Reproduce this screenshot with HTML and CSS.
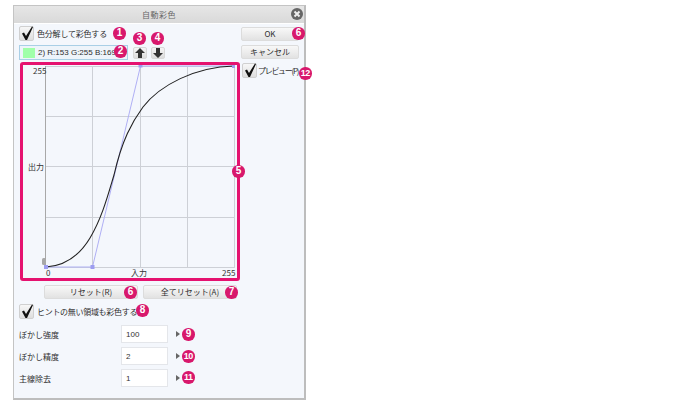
FILE: index.html
```html
<!DOCTYPE html>
<html lang="ja">

<head>
  <meta charset="UTF-8">
  <meta name="viewport" content="width=device-width, initial-scale=1.0">
  <title>自動彩色</title>
  <link rel="stylesheet" href="styles.css">
</head>

<body>

  <div class="dialog">
    <div class="title-bar">
      <span class="title">自動彩色</span>
      <span class="close-button">
        <svg width="12" height="12" viewBox="0 0 12 12">
          <circle cx="6" cy="6" r="6" fill="#666"/>
          <path d="M3.500 3.500l5 5M8.500 3.500l-5 5" stroke="#eee" stroke-width="2"/>
        </svg>
      </span>
    </div>

    <div class="dialog-body">
      <div class="left-column">
        <label class="check-row">
          <span class="checkbox"><svg width="15" height="15" viewBox="0 0 15 15"><path d="M3 7.500L5 6.500L7 10L13 0.500L14 1L8 14H6.500Z" fill="#111"/></svg></span>
          <span>色分解して彩色する</span>
        </label>

        <div class="color-row">
          <div class="color-select">
            <span class="swatch"></span>
            <span class="color-text">2) R:153 G:255 B:169</span>
          </div>
          <button class="arrow-button"><svg width="10" height="10" viewBox="0 0 10 10"><path d="M5 0L10 5H7V10H3V5H0Z" fill="#333"/></svg></button>
          <button class="arrow-button"><svg width="10" height="10" viewBox="0 0 10 10"><path d="M5 10L10 5H7V0H3V5H0Z" fill="#333"/></svg></button>
        </div>

        <div class="graph-frame">
          <svg class="graph" width="214" height="213" viewBox="23 65 214 213">
            <g class="grid-line">
              <path d="M92.500 66V267M140.500 66V267M187.500 66V267M234.500 66V267"/>
              <path d="M45 116.500H235M45 166.500H235M45 217.500H235M45 267.500H235M45 66.500H235"/>
            </g>
            <path class="axis-line" d="M45.500 66V268"/>
            <path class="control-line" d="M46 267H92.500L140.500 66H234"/>
            <path class="curve-line" d="M46 267C62 266 78 258 90 238C102 218 108 195 114 175C122 140 132 122 143 107C160 85 195 67 234 66"/>
            <rect class="handle-gray" x="42" y="258" width="4" height="7" rx="1.500"/>
            <rect class="handle" x="44" y="265" width="4" height="4"/>
            <rect class="handle" x="90.500" y="265" width="4" height="4"/>
            <rect class="handle" x="138.500" y="64.500" width="4" height="3"/>
            <rect class="handle" x="232" y="65" width="3" height="3"/>
            <text x="33" y="73.500">255</text>
            <text x="28" y="170">出力</text>
            <text x="46" y="276">0</text>
            <text x="131" y="276">入力</text>
            <text x="222" y="276">255</text>
          </svg>
        </div>

        <div class="reset-row">
          <button class="dialog-button reset-button">リセット(R)</button>
          <button class="dialog-button reset-button">全てリセット(A)</button>
        </div>

        <label class="check-row hint-row">
          <span class="checkbox"><svg width="15" height="15" viewBox="0 0 15 15"><path d="M3 7.500L5 6.500L7 10L13 0.500L14 1L8 14H6.500Z" fill="#111"/></svg></span>
          <span>ヒントの無い領域も彩色する</span>
        </label>

        <div class="field-row">
          <span class="field-label">ぼかし強度</span>
          <input class="field-input" value="100">
          <span class="field-arrow"></span>
        </div>
        <div class="field-row">
          <span class="field-label">ぼかし精度</span>
          <input class="field-input" value="2">
          <span class="field-arrow"></span>
        </div>
        <div class="field-row">
          <span class="field-label">主線除去</span>
          <input class="field-input" value="1">
          <span class="field-arrow"></span>
        </div>
      </div>

      <div class="right-column">
        <button class="dialog-button">OK</button>
        <button class="dialog-button">キャンセル</button>
        <label class="check-row preview-row">
          <span class="checkbox"><svg width="15" height="15" viewBox="0 0 15 15"><path d="M3 7.500L5 6.500L7 10L13 0.500L14 1L8 14H6.500Z" fill="#111"/></svg></span>
          <span>プレビュー(P)</span>
        </label>
      </div>
    </div>

    <!-- Number badges sit over the dialog -->
    <span class="badge badge-1">1</span>
    <span class="badge badge-2">2</span>
    <span class="badge badge-3">3</span>
    <span class="badge badge-4">4</span>
    <span class="badge badge-5">5</span>
    <span class="badge badge-6">6</span>
    <span class="badge badge-6b">6</span>
    <span class="badge badge-7">7</span>
    <span class="badge badge-8">8</span>
    <span class="badge badge-9">9</span>
    <span class="badge badge-10">10</span>
    <span class="badge badge-11">11</span>
    <span class="badge badge-12">12</span>
  </div>

</body>

</html>
```

FILE: styles.css
```css
body {
  font-family: 'Noto Sans CJK JP', 'Liberation Sans', sans-serif;
  font-size: 8px;
  color: #2e2e2e;
  background-color: #fff;
  margin: 0;
  padding: 5px 0 0 13px;
}

.dialog {
  position: relative;
  box-sizing: border-box;
  width: 293px;
  height: 395px;
  background-color: #f4f7fc;
  border: 1px solid #c4c4c4;
  border-right: 2px solid #bdbdbd;
  border-bottom: 2px solid #bdbdbd;
}

.title-bar {
  position: relative;
  height: 17px;
  background: linear-gradient(#e6e6e6, #d9d9d9);
  border-bottom: 1px solid #fff;
  text-align: center;
  line-height: 17px;
  color: #666;
  letter-spacing: 0.5px;
}

.close-button {
  position: absolute;
  top: 2px;
  right: 1px;
  height: 12px;
  line-height: 0;
}

.dialog-body {
  display: flex;
  padding: 2px 0 0 5px;
}

.left-column {
  width: 222px;
}

.right-column {
  width: 58px;
  padding-top: 1px;
}

button {
  font-family: inherit;
  font-size: inherit;
  color: inherit;
  padding: 0;
}

.check-row {
  display: flex;
  align-items: center;
  height: 15px;
  gap: 3px;
  white-space: nowrap;
  letter-spacing: -0.2px;
}

.checkbox {
  width: 15px;
  height: 15px;
  box-sizing: border-box;
  background: linear-gradient(#f7f7f7, #dedede);
  border: 1px solid #d0d0d0;
  border-radius: 2px;
  flex-shrink: 0;
}

.checkbox svg {
  display: block;
  margin: -1px;
}

.color-row {
  display: flex;
  align-items: center;
  margin-top: 4px;
  height: 15px;
}

.color-select {
  box-sizing: border-box;
  display: flex;
  align-items: center;
  width: 109px;
  height: 15px;
  background-color: #eef4fa;
  border: 1px solid #a9cfe6;
  padding-left: 3px;
  overflow: hidden;
  white-space: nowrap;
}

.swatch {
  width: 12px;
  height: 10px;
  background-color: #a0ffa9;
  flex-shrink: 0;
  margin-right: 3px;
}

.color-text {
  font-family: 'Liberation Sans', sans-serif;
  font-size: 8px;
}

.arrow-button {
  box-sizing: border-box;
  width: 14px;
  height: 12px;
  margin: 1px 0 0 5px;
  display: flex;
  align-items: center;
  justify-content: center;
  background: linear-gradient(#f5f5f5, #dcdcdc);
  border: 1px solid #d8d8d8;
  border-radius: 2px;
}

.arrow-button + .arrow-button {
  margin-left: 4px;
}

.graph-frame {
  box-sizing: border-box;
  width: 220px;
  height: 219px;
  margin: 2px 0 0 1px;
  border: 3px solid #e5126f;
  border-radius: 3px;
}

.graph {
  display: block;
}

.grid-line path {
  fill: none;
  stroke: #cdd0d6;
  stroke-width: 1;
}

.axis-line {
  fill: none;
  stroke: #a8a8a8;
  stroke-width: 1;
}

.control-line {
  fill: none;
  stroke: #b0b0f5;
  stroke-width: 1;
}

.curve-line {
  fill: none;
  stroke: #222;
  stroke-width: 1.100;
}

.handle {
  fill: #9d9df0;
}

.handle-gray {
  fill: #a8a8a8;
}

.graph text {
  font-family: 'Noto Sans CJK JP', 'Liberation Sans', sans-serif;
  font-size: 8px;
  fill: #333;
}

.reset-row {
  display: flex;
  gap: 5px;
  margin: 4px 0 0 25px;
}

.dialog-button {
  box-sizing: border-box;
  display: block;
  width: 58px;
  height: 14px;
  line-height: 12px;
  margin-bottom: 4px;
  background: linear-gradient(#f8f8f8, #e2e2e2);
  border: 1px solid #dcdcdc;
  border-radius: 2px;
  text-align: center;
}

.reset-button {
  width: 94px;
  margin-bottom: 0;
}

.hint-row {
  margin-top: 5px;
  margin-bottom: 6px;
  letter-spacing: -0.3px;
}

.preview-row {
  margin: 4px 0 0 1px;
  gap: 1px;
  letter-spacing: -1.3px;
}

.field-row {
  display: flex;
  align-items: center;
  height: 18px;
  margin-bottom: 4px;
}

.field-label {
  width: 102px;
}

.field-input {
  box-sizing: border-box;
  width: 47px;
  height: 18px;
  background-color: #fff;
  border: 1px solid #e4e6ea;
  padding: 0 0 0 4px;
  font-family: 'Liberation Sans', sans-serif;
  font-size: 8px;
  color: #333;
}

.field-arrow {
  margin-left: 8px;
  border-left: 4px solid #666;
  border-top: 3px solid transparent;
  border-bottom: 3px solid transparent;
}

.badge {
  position: absolute;
  width: 12.500px;
  height: 12.500px;
  border-radius: 50%;
  background-color: #d8186c;
  color: #fff;
  font-family: 'Liberation Sans', sans-serif;
  font-size: 10px;
  font-weight: bold;
  line-height: 12.500px;
  text-align: center;
  letter-spacing: -0.5px;
}

.badge-1 { left: 99px; top: 21px; }
.badge-2 { left: 100px; top: 39px; }
.badge-3 { left: 119px; top: 26px; }
.badge-4 { left: 137px; top: 26px; }
.badge-5 { left: 218px; top: 159px; }
.badge-6 { left: 278px; top: 21px; }
.badge-6b { left: 110px; top: 280px; }
.badge-7 { left: 211px; top: 280px; }
.badge-8 { left: 122px; top: 298px; }
.badge-9 { left: 168px; top: 322px; }
.badge-10 { left: 168px; top: 344px; font-size: 9px; }
.badge-11 { left: 168px; top: 365px; font-size: 9px; }
.badge-12 { left: 285px; top: 61px; font-size: 9px; }
```
